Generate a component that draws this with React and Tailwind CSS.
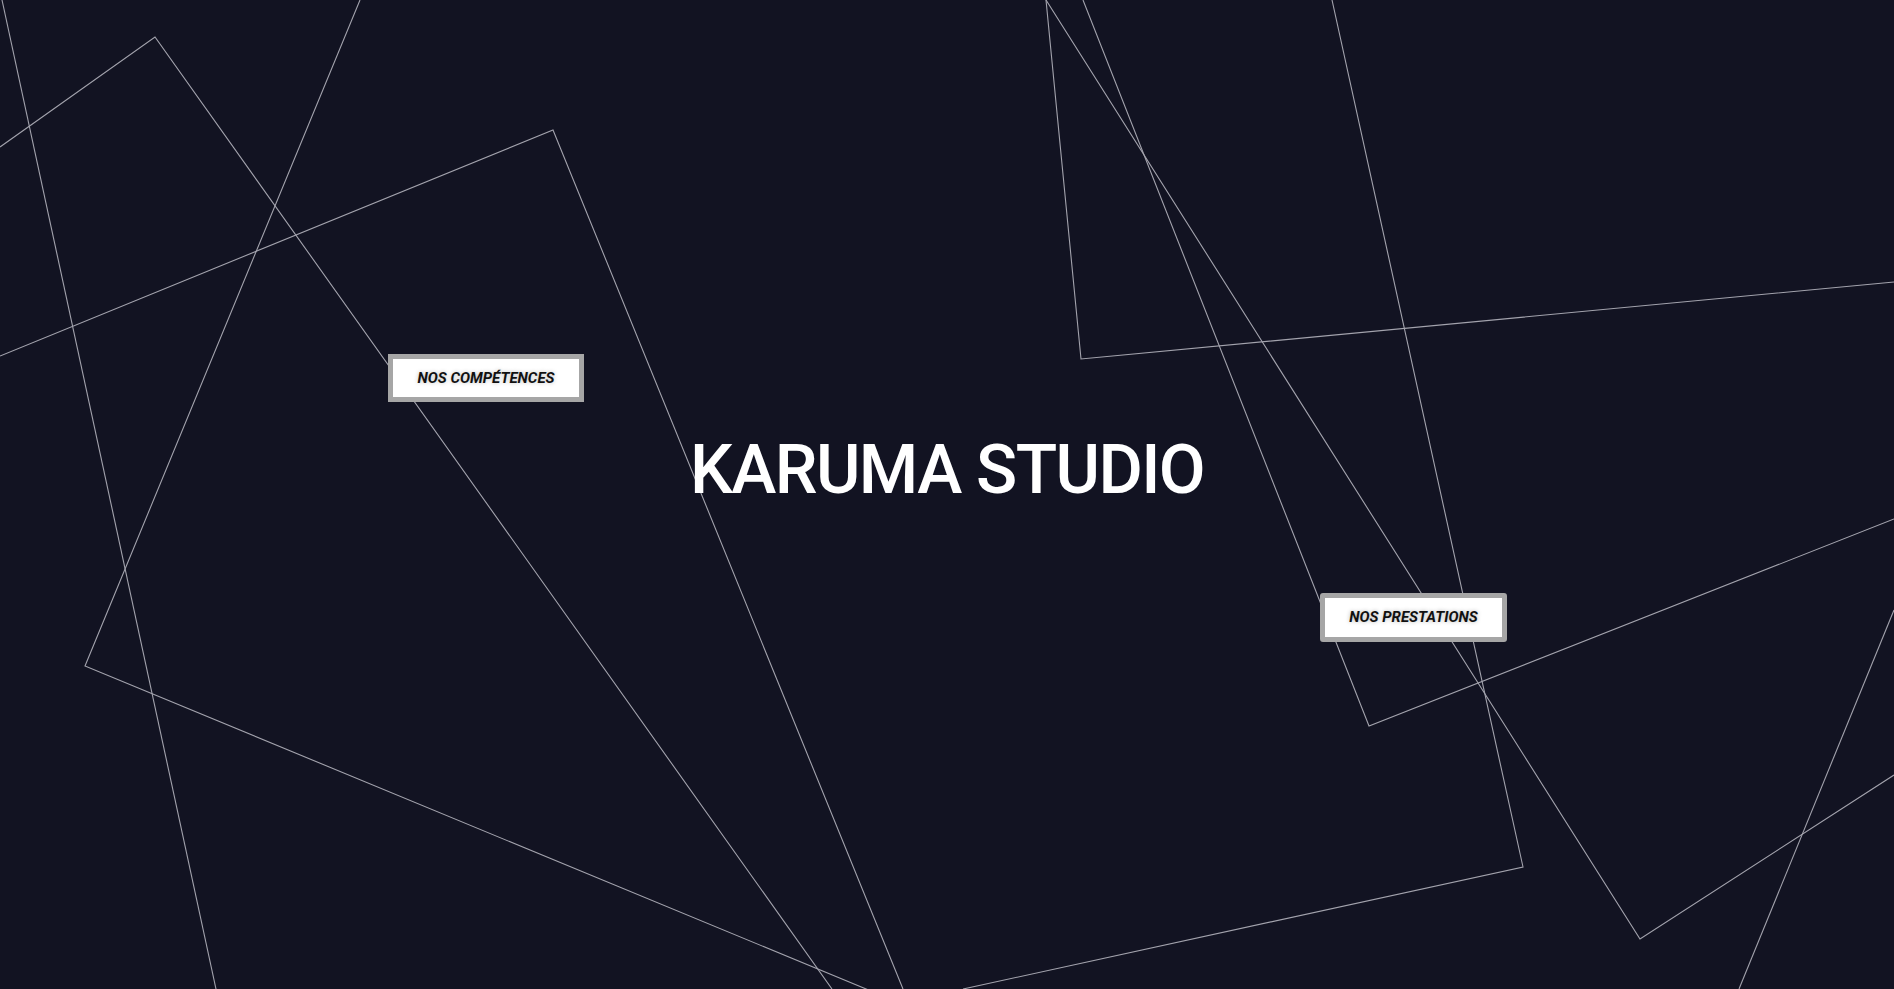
import React from "react";

const lines = [
  "2,0 216,989",
  "0,147 155,37 832,989",
  "360,0 85,666 900,1003",
  "0,356 553,130 903,989",
  "963,989 1523,867 1332,0",
  "1046,0 1081,359 1894,282",
  "1046,0 1640,939 1894,775",
  "1083,0 1369,726 1894,519",
  "1894,610 1739,989",
];

function Background() {
  return (
    <svg
      className="absolute inset-0 h-full w-full pointer-events-none"
      viewBox="0 0 1894 989"
      preserveAspectRatio="none"
    >
      {lines.map((p, i) => (
        <polyline key={i} points={p} fill="none" stroke="#a3a3ad" strokeWidth="1.1" />
      ))}
    </svg>
  );
}

export default function App() {
  return (
    <div
      className="relative h-[989px] w-full overflow-hidden bg-[#121322]"
      style={{ fontFamily: "Roboto, 'Liberation Sans', sans-serif" }}
    >
      <Background />
      <div className="relative flex h-full w-full items-center justify-center pb-[50px]">
        <h1 className="text-[68px] font-medium leading-none tracking-[-1.6px] text-white">
          KARUMA STUDIO
        </h1>
      </div>
      <a
        href="#"
        className="absolute left-[388px] top-[354px] flex h-[48px] w-[196px] items-center justify-center border-[5px] border-[#a6a6a6] bg-white text-[15px] font-bold italic text-[#111] [text-shadow:0_0_4px_rgba(0,0,0,0.25)]"
      >
        NOS COMPÉTENCES
      </a>
      <a
        href="#"
        className="absolute left-[1320px] top-[593px] flex h-[49px] w-[187px] items-center justify-center rounded-[3px] border-[5px] border-[#a6a6a6] bg-white text-[15px] font-bold italic text-[#111] [text-shadow:0_0_4px_rgba(0,0,0,0.3)]"
      >
        NOS PRESTATIONS
      </a>
    </div>
  );
}
